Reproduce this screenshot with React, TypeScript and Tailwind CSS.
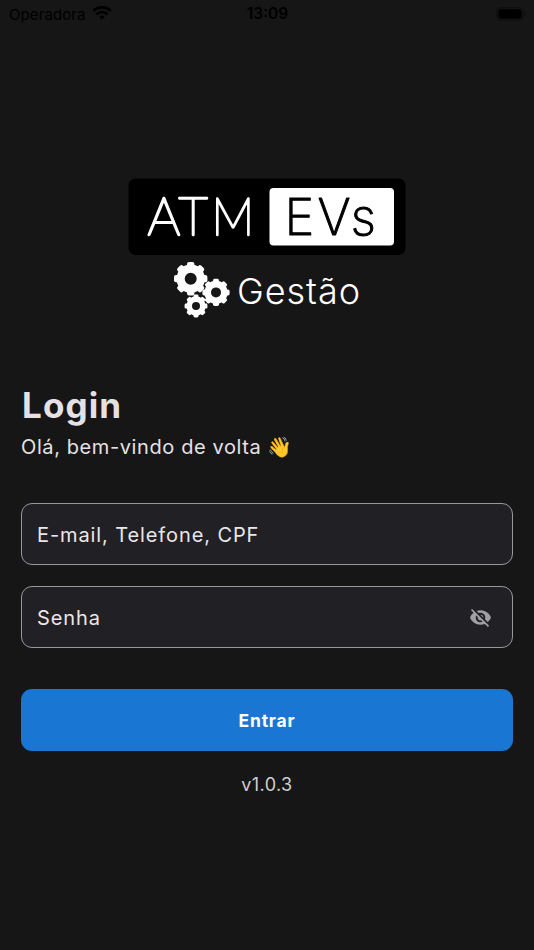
import { useState } from "react";
import { MdVisibility, MdVisibilityOff } from "react-icons/md";

const TEETH = [0, 45, 90, 135, 180, 225, 270, 315];

type GearProps = { cx: number; cy: number; r: number; hole: number };

const Gear = ({ cx, cy, r, hole }: GearProps) => (
  <g transform={`translate(${cx} ${cy})`}>
    <circle r={(r * 0.85 + hole) / 2} fill="none" stroke="#fff" strokeWidth={r * 0.85 - hole} />
    {TEETH.map((angle) => (
      <rect
        key={angle}
        x={-r * 0.22}
        y={-r}
        width={r * 0.44}
        height={r * 0.4}
        rx={r * 0.12}
        fill="#fff"
        transform={`rotate(${angle})`}
      />
    ))}
  </g>
);

const StatusBar = () => (
  <header className="grid h-7 grid-cols-3 items-center pl-[9px] pr-2 text-black">
    <div className="flex items-center gap-[6px]">
      <span className="text-[15px] leading-none tracking-[0.1px]">Operadora</span>
      <svg
        className="-mt-[2px]"
        width="20"
        height="14"
        viewBox="0 0 20 14"
        fill="none"
        stroke="currentColor"
        strokeWidth="2.7"
      >
        <path d="M1.2 4.9a12.6 12.6 0 0 1 17.6 0" />
        <path d="M4.3 8.4a8.1 8.1 0 0 1 11.4 0" />
        <path d="M10 13.5 7.2 10.8a4 4 0 0 1 5.6 0Z" fill="currentColor" stroke="none" />
      </svg>
    </div>
    <span className="text-center text-[15.5px] font-semibold leading-none">13:09</span>
    <svg className="-mt-px justify-self-end" width="30" height="14" viewBox="0 0 30 14">
      <rect x="0.7" y="0.7" width="26.6" height="12.6" rx="3.8" fill="none" stroke="#0e0e0e" />
      <rect x="2.3" y="2.3" width="23.4" height="9.4" rx="2.4" fill="#000" />
      <path d="M28.8 5v4a2.2 2.2 0 0 0 0-4Z" fill="#0e0e0e" />
    </svg>
  </header>
);

const Logo = () => (
  <svg className="mx-auto" width="278" height="142" viewBox="128 178 278 142">
    <rect x="128.5" y="178.5" width="277" height="76.5" rx="7" fill="#000" />
    <rect x="269.5" y="188" width="124.5" height="57.5" rx="4" fill="#fff" />
    <g
      fontFamily="Lato, sans-serif"
      fontSize="51.5"
      fontWeight="100"
      fill="#fff"
      stroke="#fff"
      strokeWidth="2.3"
      strokeLinejoin="round"
    >
      <text x="147.5 178.5" y="235">
        AT
      </text>
      <text transform="translate(211.5 235) scale(0.93 1)">M</text>
    </g>
    <text
      x="284.5 317.5 350.5"
      y="235"
      fontFamily="Inter, sans-serif"
      fontSize="50.5"
      fontWeight="200"
      fill="#000"
      stroke="#000"
      strokeWidth="1"
      strokeLinejoin="round"
    >
      EVs
    </text>
    <Gear cx={190.7} cy={278.7} r={16.7} hole={6} />
    <Gear cx={216} cy={292.4} r={13.6} hole={5} />
    <Gear cx={196} cy={306} r={11.4} hole={4} />
    <text
      x="237"
      y="303.5"
      fontFamily="Inter, sans-serif"
      fontSize="36"
      fontWeight="300"
      fill="#fff"
      strokeLinejoin="round"
      textLength="123"
    >
      Gestão
    </text>
  </svg>
);

const fieldClass =
  "flex h-[62px] items-center rounded-[11px] border-[1.5px] border-[#98979a] bg-[#212025] px-[15px]";
const inputClass =
  "min-w-0 flex-1 bg-transparent pt-[2px] text-[20px] tracking-[0.9px] text-[#ebe6e8] outline-none placeholder:text-[#ebe6e8] placeholder:opacity-100";

const App = () => {
  const [showPassword, setShowPassword] = useState(false);

  return (
    <div className="flex min-h-[950px] w-full flex-col bg-[#161616] font-['Inter',sans-serif]">
      <StatusBar />
      <main className="flex flex-col px-[21px] pt-[150px]">
        <Logo />
        <h1 className="mt-[61px] pl-px text-[35px] font-bold leading-[48px] tracking-[1.1px] text-[#e6e1e5]">
          Login
        </h1>
        <p className="mt-1 text-[20px] leading-[28px] tracking-[0.6px] text-[#e6e1e5]">
          Olá, bem-vindo de volta <span className="-ml-px">👋</span>
        </p>
        <form className="mt-[42px] flex flex-col" onSubmit={(e) => e.preventDefault()}>
          <div className={fieldClass}>
            <input className={inputClass} type="text" placeholder="E-mail, Telefone, CPF" />
          </div>
          <div className={`${fieldClass} mt-[21px]`}>
            <input className={inputClass} type={showPassword ? "text" : "password"} placeholder="Senha" />
            <button
              type="button"
              className="mr-[5px] text-[#a09fa2]"
              aria-label="Senha"
              onClick={() => setShowPassword(!showPassword)}
            >
              {showPassword ? <MdVisibility size={23} /> : <MdVisibilityOff size={23} />}
            </button>
          </div>
          <button
            type="submit"
            className="mt-[41px] h-[62px] rounded-[11px] bg-[#1976d2] pt-[2px] text-[17.5px] font-bold tracking-[0.8px] text-white"
          >
            Entrar
          </button>
        </form>
        <span className="mt-[22px] text-center text-[18px] leading-6 tracking-[0.4px] text-[#d2ced1]">v1.0.3</span>
      </main>
    </div>
  );
};

export default App;
